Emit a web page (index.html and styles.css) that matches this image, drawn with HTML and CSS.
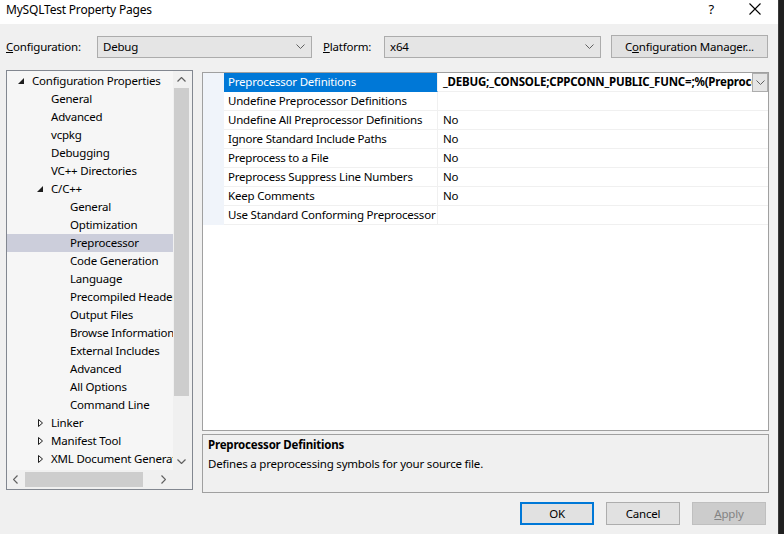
FILE: index.html
```html
<!DOCTYPE html>
<html lang="en">
<head>
    <meta charset="UTF-8">
    <title>MySQLTest Property Pages</title>
    <link rel="stylesheet" href="styles.css">
</head>
<body>
    <div class="screen">
        <div class="dialog">
            <div class="titlebar">
                <span class="title">MySQLTest Property Pages</span>
                <span class="help">?</span>
                <svg class="close" width="12" height="12" viewBox="0 0 12 12"><path d="M0.5 0.5 L11.5 11.5 M11.5 0.5 L0.5 11.5" stroke="#000" stroke-width="1.1" fill="none"/></svg>
            </div>

            <div class="toolbar">
                <label class="tb-label cfg-label"><u>C</u>onfiguration:</label>
                <div class="combo combo-cfg">
                    <span>Debug</span>
                    <svg class="chev" width="9" height="5" viewBox="0 0 9 5"><path d="M0.5 0.5 L4.5 4.5 L8.5 0.5" stroke="#606060" fill="none"/></svg>
                </div>
                <label class="tb-label plat-label"><u>P</u>latform:</label>
                <div class="combo combo-plat">
                    <span>x64</span>
                    <svg class="chev" width="9" height="5" viewBox="0 0 9 5"><path d="M0.5 0.5 L4.5 4.5 L8.5 0.5" stroke="#606060" fill="none"/></svg>
                </div>
                <button class="btn btn-mgr">C<u>o</u>nfiguration Manager...</button>
            </div>

            <div class="main">
                <div class="tree">
                    <div class="tree-body">
                        <div class="tree-list">
                            <div class="node lvl1"><svg class="exp" width="6" height="6" viewBox="0 0 6 6"><polygon points="6,0 6,6 0,6" fill="#1e1e1e"/></svg>Configuration Properties</div>
                            <div class="node lvl2">General</div>
                            <div class="node lvl2">Advanced</div>
                            <div class="node lvl2">vcpkg</div>
                            <div class="node lvl2">Debugging</div>
                            <div class="node lvl2">VC++ Directories</div>
                            <div class="node lvl2 parent"><svg class="exp" width="6" height="6" viewBox="0 0 6 6"><polygon points="6,0 6,6 0,6" fill="#1e1e1e"/></svg>C/C++</div>
                            <div class="node lvl3">General</div>
                            <div class="node lvl3">Optimization</div>
                            <div class="node lvl3 selected">Preprocessor</div>
                            <div class="node lvl3">Code Generation</div>
                            <div class="node lvl3">Language</div>
                            <div class="node lvl3">Precompiled Headers</div>
                            <div class="node lvl3">Output Files</div>
                            <div class="node lvl3">Browse Information</div>
                            <div class="node lvl3">External Includes</div>
                            <div class="node lvl3">Advanced</div>
                            <div class="node lvl3">All Options</div>
                            <div class="node lvl3">Command Line</div>
                            <div class="node lvl2 parent"><svg class="col" width="5" height="8" viewBox="0 0 5 8"><polygon points="0.5,0.5 4.5,4 0.5,7.5" fill="none" stroke="#1e1e1e"/></svg>Linker</div>
                            <div class="node lvl2 parent"><svg class="col" width="5" height="8" viewBox="0 0 5 8"><polygon points="0.5,0.5 4.5,4 0.5,7.5" fill="none" stroke="#1e1e1e"/></svg>Manifest Tool</div>
                            <div class="node lvl2 parent"><svg class="col" width="5" height="8" viewBox="0 0 5 8"><polygon points="0.5,0.5 4.5,4 0.5,7.5" fill="none" stroke="#1e1e1e"/></svg>XML Document Generator</div>
                        </div>
                        <div class="vscroll">
                            <svg class="sarrow" width="9" height="5" viewBox="0 0 9 5"><path d="M0.5 4.5 L4.5 0.5 L8.5 4.5" stroke="#606060" stroke-width="1.2" fill="none"/></svg>
                            <div class="vtrack"><div class="vthumb"></div></div>
                            <svg class="sarrow" width="9" height="5" viewBox="0 0 9 5"><path d="M0.5 0.5 L4.5 4.5 L8.5 0.5" stroke="#606060" stroke-width="1.2" fill="none"/></svg>
                        </div>
                    </div>
                    <div class="hscroll">
                        <svg class="harrow" width="5" height="9" viewBox="0 0 5 9"><path d="M4.5 0.5 L0.5 4.5 L4.5 8.5" stroke="#606060" stroke-width="1.2" fill="none"/></svg>
                        <div class="htrack"><div class="hthumb"></div></div>
                        <svg class="harrow" width="5" height="9" viewBox="0 0 5 9"><path d="M0.5 0.5 L4.5 4.5 L0.5 8.5" stroke="#606060" stroke-width="1.2" fill="none"/></svg>
                        <div class="corner"></div>
                    </div>
                </div>

                <div class="right">
                    <div class="grid">
                        <div class="row">
                            <div class="gutter"></div>
                            <div class="name sel">Preprocessor Definitions</div>
                            <div class="value bold">_DEBUG;_CONSOLE;CPPCONN_PUBLIC_FUNC=;%(PreprocessorDefinitions)</div>
                            <div class="dd">
                                <svg width="9" height="5" viewBox="0 0 9 5"><path d="M0.5 0.5 L4.5 4.5 L8.5 0.5" stroke="#606060" fill="none"/></svg>
                            </div>
                        </div>
                        <div class="row"><div class="gutter"></div><div class="name">Undefine Preprocessor Definitions</div><div class="value"></div></div>
                        <div class="row"><div class="gutter"></div><div class="name">Undefine All Preprocessor Definitions</div><div class="value">No</div></div>
                        <div class="row"><div class="gutter"></div><div class="name">Ignore Standard Include Paths</div><div class="value">No</div></div>
                        <div class="row"><div class="gutter"></div><div class="name">Preprocess to a File</div><div class="value">No</div></div>
                        <div class="row"><div class="gutter"></div><div class="name">Preprocess Suppress Line Numbers</div><div class="value">No</div></div>
                        <div class="row"><div class="gutter"></div><div class="name">Keep Comments</div><div class="value">No</div></div>
                        <div class="row"><div class="gutter"></div><div class="name">Use Standard Conforming Preprocessor</div><div class="value"></div></div>
                    </div>
                    <div class="desc">
                        <div class="desc-title">Preprocessor Definitions</div>
                        <div class="desc-text">Defines a preprocessing symbols for your source file.</div>
                    </div>
                </div>
            </div>

            <div class="footer">
                <button class="btn btn-ok">OK</button>
                <button class="btn">Cancel</button>
                <button class="btn btn-disabled"><u>A</u>pply</button>
            </div>
        </div>
        <div class="edge"></div>
    </div>
</body>
</html>
```

FILE: styles.css
```css
body {
    margin: 0;
    font-family: 'Noto Sans', 'Open Sans', sans-serif;
    font-size: 11.5px;
    letter-spacing: -0.2px;
    color: #000;
    background-color: #1f1f1f;
}
.screen {
    display: flex;
    width: 784px;
    height: 534px;
    overflow: hidden;
}
.dialog {
    width: 779px;
    height: 534px;
    background-color: #f0f0f0;
    display: flex;
    flex-direction: column;
}
.edge {
    width: 5px;
    background-color: #202020;
    border-left: 1px solid #3a3a3a;
}
svg {
    flex-shrink: 0;
}

/* title bar */
.titlebar {
    height: 24px;
    background-color: #fff;
    display: flex;
    align-items: center;
    padding-left: 6px;
}
.title {
    flex: 1;
    margin-top: -6px;
    font-size: 12px;
}
.help {
    font-size: 13px;
    margin-right: 35px;
    margin-top: -6px;
}
.close {
    margin-right: 17px;
    margin-top: -7px;
}

/* configuration row */
.toolbar {
    display: flex;
    align-items: center;
    height: 23px;
    margin-top: 11px;
    padding-left: 6px;
}
.tb-label {
    display: block;
}
.cfg-label {
    width: 91px;
}
.plat-label {
    width: 61px;
    margin-left: 11px;
}
.combo {
    background-color: #e5e5e5;
    border: 1px solid #acacac;
    display: flex;
    align-items: center;
    justify-content: space-between;
    padding: 0 5px 0 5px;
    box-sizing: border-box;
    height: 22px;
}
.combo-cfg {
    width: 215px;
}
.combo-plat {
    width: 217px;
}
.chev {
    margin-right: 1px;
}
.btn {
    font-family: inherit;
    font-size: 11.5px;
    letter-spacing: -0.2px;
    background-color: #e1e1e1;
    border: 1px solid #adadad;
    color: #000;
    padding: 0;
    height: 23px;
    width: 74px;
    box-sizing: border-box;
}
.btn-mgr {
    width: 157px;
    margin-left: 10px;
}

/* main area */
.main {
    display: flex;
    margin-top: 12px;
    padding-left: 6px;
}
.tree {
    width: 187px;
    height: 420px;
    border: 1px solid #828790;
    box-sizing: border-box;
    display: flex;
    flex-direction: column;
    background-color: #f0f0f0;
}
.tree-body {
    display: flex;
    height: 399px;
}
.tree-list {
    width: 166px;
    padding-top: 1px;
    background-color: #f6f6f6;
    overflow: hidden;
    white-space: nowrap;
}
.node {
    height: 18px;
    line-height: 18px;
    display: flex;
    align-items: center;
}
.lvl1 {
    padding-left: 25px;
}
.lvl2 {
    padding-left: 44px;
}
.lvl3 {
    padding-left: 63px;
}
.node .exp {
    margin-left: -14px;
    margin-right: 8px;
}
.node .col {
    margin-left: -13px;
    margin-right: 8px;
}
.selected {
    background-color: #cccedb;
}
.vscroll {
    width: 17px;
    display: flex;
    flex-direction: column;
    align-items: center;
    background-color: #f0f0f0;
}
.sarrow {
    margin: 6px 0;
}
.vtrack {
    flex: 1;
    width: 100%;
    display: flex;
    flex-direction: column;
}
.vthumb {
    width: 15px;
    margin: 0 auto;
    height: 308px;
    background-color: #cdcdcd;
}
.hscroll {
    height: 19px;
    display: flex;
    align-items: center;
}
.harrow {
    margin: 0 6px;
}
.htrack {
    width: 131px;
    display: flex;
}
.hthumb {
    width: 118px;
    height: 15px;
    margin-left: 1px;
    background-color: #cdcdcd;
}
.corner {
    flex: 1;
    align-self: stretch;
}

/* property grid */
.right {
    margin-left: 9px;
    margin-top: 2px;
    width: 567px;
    display: flex;
    flex-direction: column;
}
.grid {
    height: 359px;
    border: 1px solid #a0a0a0;
    box-sizing: border-box;
    background-color: #fff;
}
.row {
    display: flex;
    height: 19px;
    line-height: 18px;
}
.gutter {
    width: 21px;
    background-color: #f0f4fa;
}
.name {
    width: 214px;
    padding-left: 4px;
    box-sizing: border-box;
    border-bottom: 1px solid #f0f0f0;
    border-right: 1px solid #f0f0f0;
    white-space: nowrap;
    overflow: hidden;
}
.name.sel {
    background-color: #0078d7;
    color: #fff;
    border-bottom-color: #0078d7;
}
.value {
    flex: 1;
    padding-left: 5px;
    border-bottom: 1px solid #f0f0f0;
    white-space: nowrap;
    overflow: hidden;
}
.bold {
    font-weight: bold;
}
.dd {
    width: 16px;
    height: 19px;
    border: 1px solid #adadad;
    box-sizing: border-box;
    background-color: #e5e5e5;
    display: flex;
    align-items: center;
    justify-content: center;
}
.desc {
    margin-top: 3px;
    height: 59px;
    border: 1px solid #a0a0a0;
    box-sizing: border-box;
    padding: 0 5px;
}
.desc-title {
    font-weight: bold;
    line-height: 19px;
}
.desc-text {
    line-height: 19px;
}

/* dialog buttons */
.footer {
    display: flex;
    justify-content: flex-end;
    gap: 12px;
    margin-top: 9px;
    padding-right: 12px;
}
.btn-ok {
    border: 2px solid #0078d7;
}
.btn-disabled {
    background-color: #cccccc;
    border-color: #bfbfbf;
    color: #838383;
}
```
